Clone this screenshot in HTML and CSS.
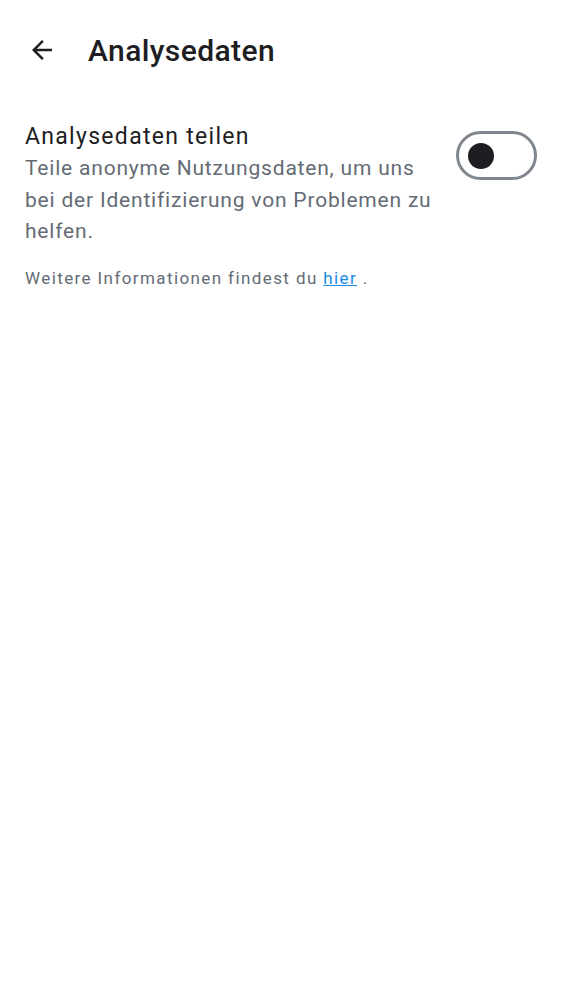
FILE: index.html
```html
<!DOCTYPE html>
<html lang="de">
<head>
<meta charset="utf-8">
<link rel="stylesheet" href="styles.css">
</head>
<body>
<div class="page">
  <header class="topbar">
    <button class="back" aria-label="Zurück">
      <svg width="30" height="30" viewBox="0 0 24 24"><path d="M20 11H7.83l5.59-5.59L12 4l-8 8 8 8 1.41-1.41L7.83 13H20v-2z" fill="#1d1d22"/></svg>
    </button>
    <h1 class="title">Analysedaten</h1>
  </header>
  <section class="setting">
    <div class="setting-text">
      <div class="setting-title">Analysedaten teilen</div>
      <div class="setting-desc">Teile anonyme Nutzungsdaten, um uns bei der Identifizierung von Problemen zu helfen.</div>
    </div>
    <div class="switch"><span class="thumb"></span></div>
  </section>
  <p class="info">Weitere Informationen findest du <a href="#" class="link">hier</a> .</p>
</div>
</body>
</html>
```

FILE: styles.css
```css
html, body {
  margin: 0;
  padding: 0;
  background: #ffffff;
}
body {
  font-family: Roboto, "Noto Sans", sans-serif;
  color: #1d1d22;
}
.page {
  padding: 0 25px;
}
.topbar {
  display: flex;
  align-items: center;
  height: 100px;
  gap: 30px;
}
.back {
  border: 0;
  background: none;
  padding: 0;
  width: 33px;
  height: 33px;
  display: flex;
  align-items: center;
  justify-content: center;
}
.title {
  margin: 0;
  font-size: 30px;
  font-weight: 500;
  letter-spacing: 0.4px;
  color: #1d1d22;
}
.setting {
  display: flex;
  align-items: flex-start;
  justify-content: space-between;
  gap: 12px;
  margin-top: 21px;
}
.setting-text {
  width: 418px;
}
.setting-title {
  font-size: 23px;
  line-height: 32px;
  letter-spacing: 1.3px;
  color: #1d1d22;
}
.setting-desc {
  font-size: 21px;
  line-height: 31.5px;
  letter-spacing: 0.8px;
  color: #646b75;
}
.switch {
  flex: none;
  box-sizing: border-box;
  width: 81px;
  height: 49px;
  border: 3px solid #80868e;
  border-radius: 25px;
  display: flex;
  align-items: center;
  padding-left: 9px;
  margin-top: 10px;
}
.thumb {
  width: 26px;
  height: 26px;
  border-radius: 50%;
  background: #1d1d22;
}
.info {
  margin: 20px 0 0;
  font-size: 17px;
  letter-spacing: 1.4px;
  color: #646b75;
}
.link {
  color: #1a8ae6;
  text-decoration: underline;
}
```
